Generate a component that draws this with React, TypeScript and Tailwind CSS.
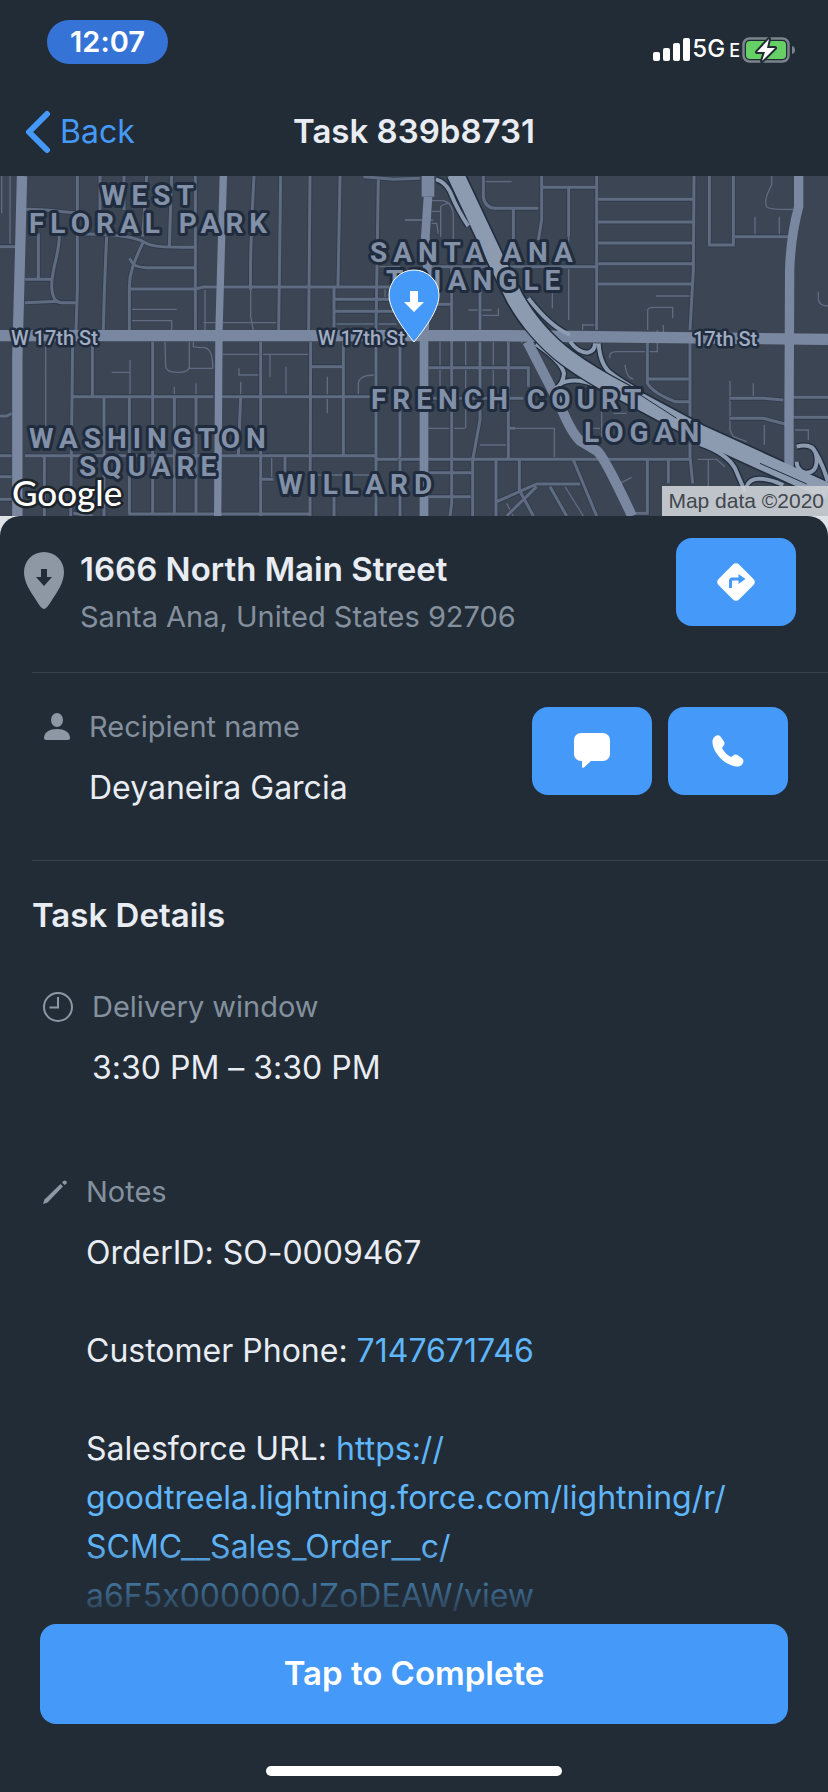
import React from 'react';

interface MapLabel {
    text: string;
    x: number;
    y: number;
}

interface DetailRowProps {
    icon: React.ReactNode;
    label: string;
    children: React.ReactNode;
    indent: string;
}

const districts: MapLabel[] = [
    { text: 'WEST', x: 101, y: 29 },
    { text: 'FLORAL PARK', x: 29, y: 57 },
    { text: 'SANTA ANA', x: 370, y: 86 },
    { text: 'TRIANGLE', x: 386, y: 114 },
    { text: 'FRENCH COURT', x: 371, y: 233 },
    { text: 'LOGAN', x: 584, y: 266 },
    { text: 'WASHINGTON', x: 29, y: 272 },
    { text: 'SQUARE', x: 79, y: 300 },
    { text: 'WILLARD', x: 278, y: 318 },
];

const streets: MapLabel[] = [
    { text: 'W 17th St', x: 11, y: 169 },
    { text: 'W 17th St', x: 318, y: 169 },
    { text: '17th St', x: 693, y: 170 },
];

// West half of the map, one unit is a third of a pixel
const westStreets =
    'M0 230H50M232 18V360L228 480M300 18V120M372 18V120M440 18L428 200M515 18L508 228M586 18V480M75 118C140 115 190 130 240 128M115 190V325M75 328H155M178 190C180 250 155 290 155 350Q158 400 185 398H230M75 398L175 394M232 192C340 190 400 200 430 215C450 230 480 232 586 232M320 200C315 300 312 380 310 480M430 215C400 280 388 310 388 350V480M388 265L402 285Q420 293 440 293H586M388 357H586L610 351H1204M762 18C755 150 750 300 752 360M842 18L836 480M930 18L926 480M1020 18L1014 348M1135 25L1128 480M1090 20L1180 28L1260 25M1002 350V480M1002 388H1170M1002 424H1190M218 515L212 1038M277 515V680M218 680H640M665 680H1125M312 680V1038M388 680V1030M458 515V1030M523 680V1030M588 680V1030M722 680L715 855M782 515V1038M932 515L930 1038M1030 515V855M1128 515V1038M1200 515V1038M935 590H1030M0 738H20L35 730M0 857H35M75 857H640M665 857H1125L1130 868H1260M0 920H35M0 988H35M133 860V1038M783 928H820M855 860V928M385 1032H930M1002 980V1038M220 1030L280 1038';
const westLanes =
    'M30 18V222M5 18V130M395 418H530M395 452H515V480M615 360V480M610 458H835M752 360V440L760 480M1002 462H1190M1215 150H1300M1130 290H1200M137 515V770M982 620V730M1075 680V640Q1078 615 1125 615M390 570V680M335 607H390M495 515L497 590Q500 607 530 607Q568 607 568 590V515M580 515V530L600 533Q640 525 638 595H568M668 553H930M810 553V620M858 590V680M717 595V615H778M722 635V680M523 650V680M588 640V680M815 860V928M945 915H1125M1155 350V388';

// East half of the map
const eastStreets =
    'M155 290V1000L150 1038M240 290V480M240 515V750L218 870V1038M325 515V865M250 18V80Q255 115 290 115H415M340 115V210M425 18V150L415 210M425 52H590M506 55V200M590 18V480M882 18L880 300L870 480M595 88H880M595 156H880M595 219H880M595 281H880M595 342H880M928 18V225H1000V18M1005 200H1175M85 290H590M95 403H155M85 593H385V650M85 685H370M0 868H870M288 870V1038M358 870V960L400 1038M85 908H218M85 980H212M290 995L410 942H540M410 950L320 1038M450 950L500 1038M520 870L590 1038M742 515V640Q760 670 825 695H870M742 870V1030H700M805 870V940M870 515V860L878 940M742 627H865M990 685H1090L1150 690M1180 682H1284M990 745H1090L1155 762M1180 742H1284M0 868V1038M325 775H345';
const eastLanes =
    'M95 92H130Q160 100 160 140V220M122 200V110Q130 100 150 100M95 124H122M95 160H110L115 190M15 150H65M250 35H335M768 378H875M743 480V420Q745 412 760 412H818V445M548 480V465H588M1065 140V200M1138 140V200M1115 18V45Q1090 90 1100 110Q1110 120 1180 118M1255 365V390Q1260 408 1284 408M506 200V450M205 420H275M245 436H295V415M457 370V415M120 515V680M197 515V775M280 515V650M365 515V520M85 775H195M345 775H463V865M240 825H325M320 1000L340 1038M495 950L550 1038M660 940L695 922M630 565Q625 545 650 545H772V480M675 585Q680 625 700 627M990 632V780L1000 800L1040 815M1060 640V685M1093 765V825M1185 780H1225V810M893 868H950L975 890M925 870V950M605 720V800M550 775H600M640 730H680M790 465V490';
const ramps =
    'M108 28Q135 35 150 65Q175 125 205 168M385 385Q450 470 510 495M408 522Q485 575 492 610Q490 640 468 655M480 642Q540 610 640 675M510 515Q535 548 562 548Q585 545 585 520M596 520Q600 590 640 615Q660 630 715 662M900 822Q980 850 1005 895L1035 965M1040 950Q1055 905 1150 945M1190 830Q1250 815 1250 870Q1250 910 1215 908Q1190 900 1190 875M1235 830Q1260 860 1284 935';
const freeway = 'M165 10L282 258L345 385Q405 490 500 563Q570 615 680 672L900 790L1284 965';

const MapView: React.FC = () => (
    <section aria-label="Map" className="relative h-[340px] overflow-hidden bg-[#3b4553]">
        <svg viewBox="0 0 828 340" preserveAspectRatio="xMidYMid slice" className="h-full w-full" fill="none">
            <g transform="scale(0.333333) translate(0 -18)" stroke="#5f6b81">
                <path d={westLanes} strokeWidth="4" />
                <path d={westStreets} stroke="#313c4d" strokeWidth="14" />
                <path d={westStreets} strokeWidth="9" />
                <g transform="translate(1200 0)">
                    <path d={eastLanes} strokeWidth="4" />
                    <path d={eastStreets} stroke="#313c4d" strokeWidth="14" />
                    <path d={eastStreets} strokeWidth="9" />
                </g>
                <g transform="translate(1200 0)">
                    <path d={ramps} stroke="#222e3f" strokeWidth="20" />
                    <path d={freeway} stroke="#222e3f" strokeWidth="60" />
                </g>
                <g stroke="#7a87a0">
                    <path d="M66 18L60 260L52 560V1038" strokeWidth="31" />
                    <path d="M670 18L657 480L653 1038" strokeWidth="22" />
                    <path d="M0 497H1500L2484 508" strokeWidth="34" />
                    <path d="M1284 10V80" strokeWidth="38" />
                    <path d="M1284 80L1276 200L1282 290L1272 515V1038" strokeWidth="26" />
                    <path d="M2396 18V110Q2372 200 2369 300L2367 760V930" strokeWidth="28" />
                    <path d="M1582 515L1680 705Q1712 785 1740 812L1790 842Q1812 858 1896 1038" strokeWidth="30" />
                </g>
                <g transform="translate(1200 0)" stroke="#8d9bb0">
                    <path d={ramps} strokeWidth="12" />
                    <path d="M282 258L345 385Q405 490 500 563Q570 615 680 672" stroke="#222e3f" strokeWidth="58" />
                    <path d={freeway} strokeWidth="50" />
                    <path d="M690 655L830 745M1080 880L1220 942" stroke="#222e3f" strokeWidth="3" />
                </g>
            </g>
            <g
                className="font-['Roboto',sans-serif] text-[28px] font-bold tracking-[6px] [paint-order:stroke]"
                fill="#8290a8"
                stroke="#202c3d"
                strokeWidth="6"
                strokeLinejoin="round"
            >
                {districts.map(d => (
                    <text key={d.text} x={d.x} y={d.y}>{d.text}</text>
                ))}
            </g>
            <g
                className="font-['Roboto',sans-serif] text-[20px] font-medium [paint-order:stroke]"
                fill="#a0adc2"
                stroke="#202c3d"
                strokeWidth="5"
                strokeLinejoin="round"
            >
                {streets.map(s => (
                    <text key={s.x} x={s.x} y={s.y}>{s.text}</text>
                ))}
            </g>
        </svg>

        <svg viewBox="0 0 52 74" className="absolute top-[93px] left-1/2 h-[74px] w-[52px] -translate-x-1/2">
            <path d="M26 73C18 63 1 42 1 26a25 25 0 0 1 50 0C51 42 34 63 26 73Z" fill="#4599f8" stroke="#fff" />
            <path d="M22 22h8v11h6L26 43 16 33h6Z" fill="#fff" />
        </svg>

        <span className="absolute bottom-1 left-3 font-['Lato',sans-serif] text-[35px] leading-[40px] font-medium text-white [-webkit-text-stroke:5px_#1d232b] [paint-order:stroke]">
            Google
        </span>
        <span className="absolute right-0 bottom-0 bg-[#cdd1d6]/90 pr-1 pl-[6px] font-['Liberation_Sans',sans-serif] text-[21px] leading-[30px] text-[#41464d]">
            Map data ©2020
        </span>
    </section>
);

const DetailRow: React.FC<DetailRowProps> = ({ icon, label, children, indent }) => (
    <div className="flex">
        <div className={`flex h-9 shrink-0 items-center ${indent}`}>{icon}</div>
        <div className="min-w-0">
            <h3 className="text-[29px] leading-[36px] text-[#84909d]">{label}</h3>
            <div className="mt-[18px] text-[32px] leading-[49px]">{children}</div>
        </div>
    </div>
);

const ActionButton: React.FC<{ label: string; children: React.ReactNode }> = ({ label, children }) => (
    <button type="button" aria-label={label} className="flex h-[88px] w-[120px] shrink-0 items-center justify-center rounded-2xl bg-[#4599f8]">
        {children}
    </button>
);

const StatusBar: React.FC = () => (
    <div className="flex h-[88px] items-start justify-between pt-5 pr-8 pl-[47px]">
        <div className="flex h-11 w-[121px] items-center justify-center rounded-full bg-[#3573d6] text-[29px] font-semibold text-white">
            12:07
        </div>
        <div className="flex h-[60px] items-center text-white">
            <svg viewBox="0 0 38 24" className="h-6 w-[38px]" fill="#fff">
                <rect x="0" y="14" width="7" height="9" rx="2" />
                <rect x="10" y="10" width="7" height="13" rx="2" />
                <rect x="20" y="5" width="7" height="18" rx="2" />
                <rect x="30" y="0" width="7" height="23" rx="2" />
            </svg>
            <span className="ml-px flex items-baseline gap-1 text-[24px] leading-6 font-medium">
                5G<span className="text-[18px]">E</span>
            </span>
            <svg viewBox="0 0 54 26" className="ml-[2px] h-[26px] w-[54px]">
                <rect x="1.5" y="1.5" width="45" height="23" rx="6" fill="none" stroke="#7b838b" strokeWidth="2.5" />
                <path d="M50 9c4 1 4 7 0 8Z" fill="#7b838b" />
                <rect x="4" y="4" width="40" height="18" rx="4" fill="#66cf66" />
                <path d="M27 2L15 15h8l-3 9L33 11h-8Z" fill="#fff" stroke="#222c36" strokeWidth="4" strokeLinejoin="round" className="[paint-order:stroke]" />
            </svg>
        </div>
    </div>
);

export default function App() {
    return (
        <div className="flex min-h-screen flex-col bg-[#222c36] font-['Inter',sans-serif] text-[#e9edf3] [font-feature-settings:'calt'_0]">
            <StatusBar />

            <header className="grid h-[88px] grid-cols-[1fr_auto_1fr] items-center px-6">
                <button type="button" className="flex items-center gap-2 justify-self-start text-[32px] text-[#4599f8]">
                    <svg viewBox="0 0 28 44" className="h-11 w-7" fill="none" stroke="currentColor" strokeWidth="6" strokeLinecap="round" strokeLinejoin="round">
                        <path d="M23 4L5 22L23 40" />
                    </svg>
                    Back
                </button>
                <h1 className="text-[33px] font-semibold">Task 839b8731</h1>
            </header>

            <MapView />

            <main className="flex flex-1 flex-col bg-[#dfe2e6]">
                <div className="flex-1 rounded-t-[20px] bg-[#222c36]">
                    <section className="flex h-[156px] items-start pt-[22px] pr-8 pl-6">
                        <svg viewBox="0 0 40 57" className="mt-[14px] h-[57px] w-10 shrink-0">
                            <path d="M20 57C18 57 15 53 12 48C6 39 0 30 0 20a20 20 0 0 1 40 0C40 30 34 39 28 48C25 53 22 57 20 57Z" fill="#8d98a4" />
                            <path d="M17 17h6v8h5L20 34l-8-9h5Z" fill="#222c36" />
                        </svg>
                        <div className="mt-[7px] ml-4 flex-1">
                            <h2 className="text-[33px] leading-[48px] font-semibold">1666 North Main Street</h2>
                            <p className="mt-[6px] text-[29px] leading-[36px] text-[#84909d]">Santa Ana, United States 92706</p>
                        </div>
                        <ActionButton label="Directions">
                            <svg viewBox="0 0 38 38" className="size-[38px]">
                                <path d="M16 1.500a4.200 4.200 0 0 1 6 0L36.500 16a4.200 4.200 0 0 1 0 6L22 36.500a4.200 4.200 0 0 1-6 0L1.500 22a4.200 4.200 0 0 1 0-6Z" fill="#fff" />
                                <path d="M13.500 25V18q0-2 2-2H23" fill="none" stroke="#4599f8" strokeWidth="3" />
                                <path d="M21.500 11L28.500 16L21.500 21Z" fill="#4599f8" />
                            </svg>
                        </ActionButton>
                    </section>

                    <section className="ml-8 flex items-start justify-between border-t border-[#36414c] pt-[34px] pr-10 pb-12">
                        <div className="pt-[2px]">
                            <DetailRow
                                label="Recipient name"
                                indent="w-[57px] pl-3"
                                icon={
                                    <svg viewBox="0 0 26 28" className="h-7 w-[26px]" fill="#8d98a4">
                                        <ellipse cx="13" cy="7" rx="6" ry="7" />
                                        <path d="M0 25c0-6 6-9 13-9s13 3 13 9q0 2-2 2H2q-2 0-2-2Z" />
                                    </svg>
                                }
                            >
                                Deyaneira Garcia
                            </DetailRow>
                        </div>
                        <div className="flex gap-4">
                            <ActionButton label="Message">
                                <svg viewBox="0 0 38 36" className="h-9 w-[38px]" fill="#fff">
                                    <path d="M8 0H30a7 7 0 0 1 7 7V21a7 7 0 0 1-7 7H18L11 34.500q-2 1-2-1V28H8a7 7 0 0 1-7-7V7a7 7 0 0 1 7-7Z" />
                                </svg>
                            </ActionButton>
                            <ActionButton label="Call">
                                <svg viewBox="0 0 32 32" className="size-8" fill="#fff">
                                    <path d="M3.500 1C5.500 0 7.500 0 8.800 2L12 6.500C13 8.500 12.500 10 11 11.500C10 12.500 10 13 10.500 14C12.500 17 15 19.500 18 21.500C19 22 19.500 22 20.500 21C22 19.500 23.500 19 25.500 20L30 23.200C31.500 24.500 31.700 26 31 28C29.500 31 27 32 23.500 31.500C12 29.500 1.500 18 .5 8C.3 5 1 2.500 3.500 1Z" />
                                </svg>
                            </ActionButton>
                        </div>
                    </section>

                    <section className="ml-8 border-t border-[#36414c] pt-[30px] pr-10">
                        <h2 className="text-[33px] leading-[49px] font-semibold">Task Details</h2>

                        <div className="mt-[49px]">
                            <DetailRow
                                label="Delivery window"
                                indent="w-[60px] pl-[11px]"
                                icon={
                                    <svg viewBox="0 0 30 30" className="size-[30px]" fill="none" stroke="#8d98a4" strokeWidth="2">
                                        <circle cx="15" cy="15" r="14" />
                                        <path d="M15 5V15.500H6.500" />
                                    </svg>
                                }
                            >
                                3:30 PM – 3:30 PM
                            </DetailRow>
                        </div>

                        <div className="mt-[82px]">
                            <DetailRow
                                label="Notes"
                                indent="w-[54px] pl-[11px]"
                                icon={
                                    <svg viewBox="0 0 24 24" className="size-6" fill="#8d98a4">
                                        <path d="M0 24L1.500 19.500L17.500 4L20 6.500L4.500 22.500Z" />
                                        <path d="M19 2.500L20.500 1Q22 0 23.300 1.300Q24.300 2.500 23.300 3.700L21.500 5Z" />
                                    </svg>
                                }
                            >
                                <p>OrderID: SO-0009467</p>
                                <p className="mt-[49px]">
                                    Customer Phone: <a href="tel:7147671746" className="text-[#5fb6fa]">7147671746</a>
                                </p>
                                <p className="mt-[49px]">
                                    Salesforce URL:{' '}
                                    <a href="https://goodtreela.lightning.force.com/lightning/r/SCMC__Sales_Order__c/a6F5x000000JZoDEAW/view" className="text-[#5fb6fa]">
                                        https://<br />
                                        goodtreela.lightning.force.com/lightning/r/<br />
                                        SCMC__Sales_Order__c/<br />
                                        a6F5x000000JZoDEAW/view
                                    </a>
                                </p>
                            </DetailRow>
                        </div>
                    </section>
                </div>
            </main>

            <footer className="sticky bottom-0 bg-[#222c36] px-10 pb-4">
                <div className="pointer-events-none absolute inset-x-0 bottom-full h-20 bg-linear-to-b from-[#222c36]/0 to-[#222c36]" />
                <button type="button" className="block h-[100px] w-full rounded-2xl bg-[#4599f8] text-[33px] font-semibold text-white">
                    Tap to Complete
                </button>
                <div className="mx-auto mt-[42px] h-[10px] w-[296px] rounded-full bg-white" />
            </footer>
        </div>
    );
}
